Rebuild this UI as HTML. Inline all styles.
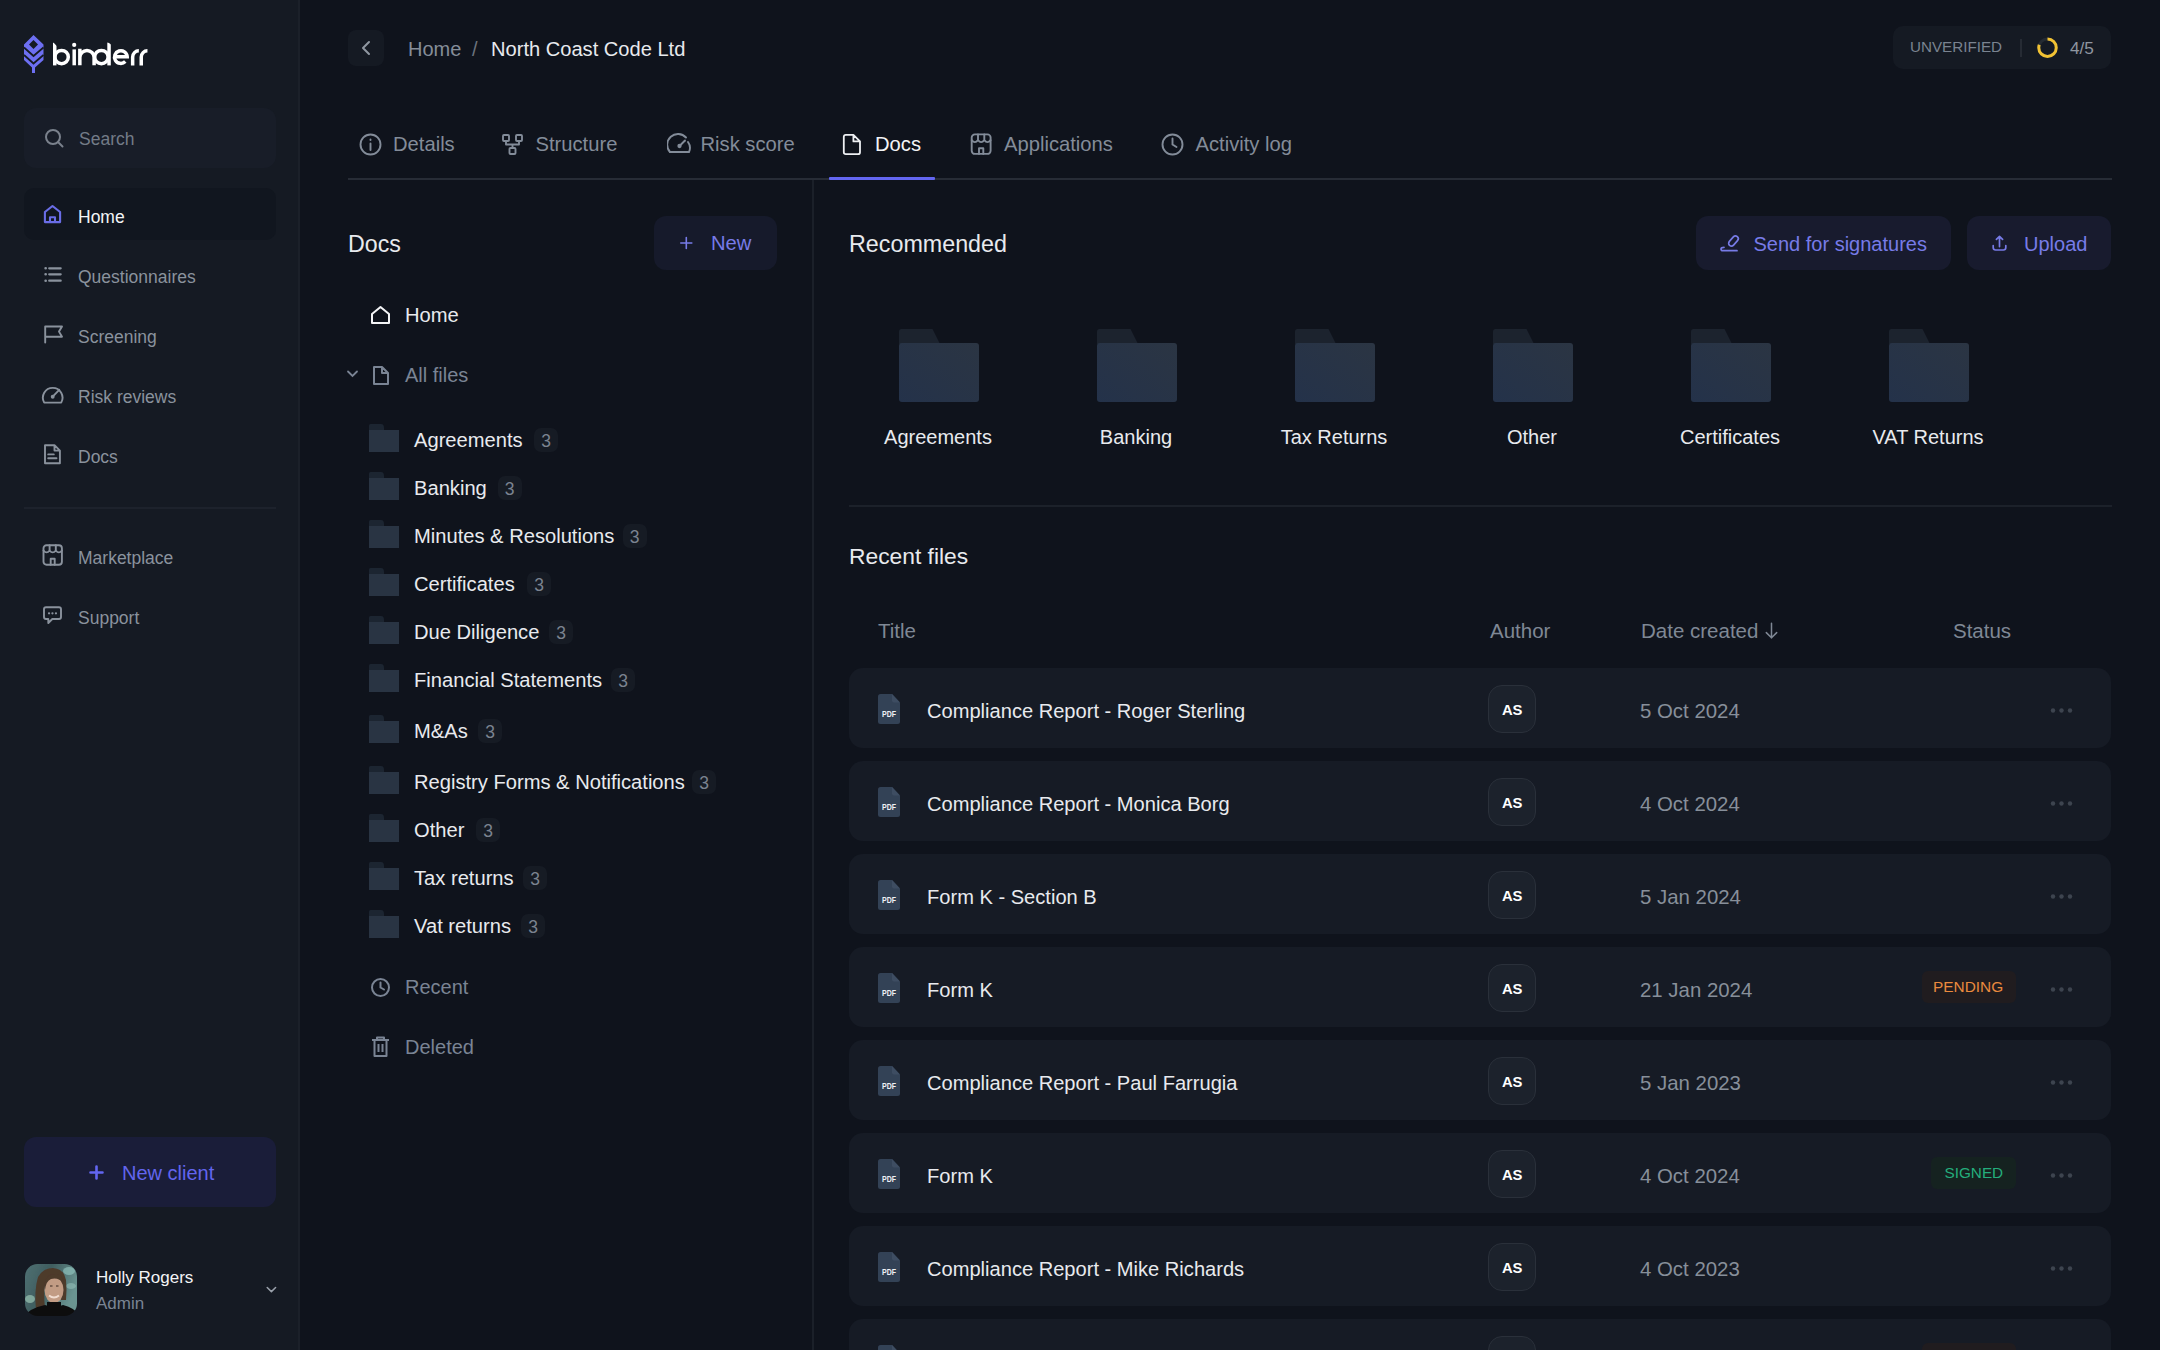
<!DOCTYPE html><html><head><meta charset="utf-8"><style>
html,body{margin:0;padding:0;}
body{width:2160px;height:1350px;overflow:hidden;background:#0f131c;position:relative;font-family:"Liberation Sans",sans-serif;}
.t{position:absolute;height:40px;line-height:40px;white-space:nowrap;}
.b{position:absolute;}
</style></head><body>
<div class="b" style="left:0px;top:0px;width:298px;height:1350px;background:#151a23;border-radius:0px;"></div>
<div class="b" style="left:298px;top:0px;width:2px;height:1350px;background:#1b2029;border-radius:0px;"></div>
<svg class="b" style="left:24px;top:35px;" width="20" height="38" viewBox="0 0 20 38"><path fill="#6d6ff2" d="M9.5 0 L19.5 9.5 L19.5 25 L11 32.5 L11 38 L8 38 L8 32.5 L0 25 L0 9.5 Z"/>
<path fill="#151a23" d="M9.5 5 L14 9.5 L9.5 14 L5 9.5 Z"/>
<path fill="none" stroke="#151a23" stroke-width="1.8" d="M0 12.5 L9.5 21 L19.5 12.5 M0 20 L9.5 28.5 L19.5 20"/></svg>
<svg class="b" style="left:48px;top:38px;" width="104" height="32" viewBox="0 0 104 32"><g transform="translate(-48 -38)" fill="none" stroke="#ffffff" stroke-width="3.5">
<path d="M54.75 42.6 V65.4"/><circle cx="61.6" cy="57.1" r="6.7"/>
<path d="M74.2 49.4 V65.3"/>
<path d="M79.85 48.7 V65.3 M79.85 57.5 A7.12 7.12 0 0 1 94.1 57.5 V65.3"/>
<circle cx="101.4" cy="57.1" r="6.7"/><path d="M109.05 42.6 V65.4"/>
<path d="M114.5 56.7 H127.2 A6.35 6.35 0 1 0 125.3 61.6"/>
<path d="M132.65 65.5 V57 A6.2 6.2 0 0 1 138.85 50.8"/>
<path d="M141.25 65.5 V57 A6.2 6.2 0 0 1 147.45 50.8"/>
</g><g transform="translate(-48 -38)" fill="#151a23"><path d="M52 41 L58 41 L58 47.3 Z"/><path d="M106.5 41 L112.5 41 L112.5 45.8 Z"/></g><circle cx="26.2" cy="6.9" r="2.1" fill="#fff"/></svg>
<div class="b" style="left:24px;top:108px;width:252px;height:60px;background:#181d28;border-radius:12px;"></div>
<svg class="b" style="left:44px;top:128px;" width="20" height="20" viewBox="0 0 20 20"><circle cx="9" cy="9" r="7" fill="none" stroke="#7a818c" stroke-width="2"/><path d="M14 14 L18.5 18.5" stroke="#7a818c" stroke-width="2" stroke-linecap="round"/></svg>
<div class="t" style="left:79px;top:118.62px;font-size:17.5px;color:#737b87;font-weight:400;">Search</div>
<div class="b" style="left:24px;top:188px;width:252px;height:52px;background:#11161f;border-radius:10px;"></div>
<svg class="b" style="left:43px;top:204px;" width="19" height="21" viewBox="0 0 19 21"><g stroke="#6a6de6" stroke-width="2.1" fill="none" stroke-linejoin="round" stroke-linecap="round"><path d="M1.9 8 L9.5 2 L17.1 8 V18.1 H1.9 Z"/><path d="M7 18 V13.2 H12 V18"/></g></svg>
<div class="t" style="left:78px;top:196.81px;font-size:17.5px;color:#f3f4f6;font-weight:400;">Home</div>
<div class="t" style="left:78px;top:257.12px;font-size:17.5px;color:#8a929d;font-weight:400;">Questionnaires</div>
<div class="t" style="left:78px;top:317.12px;font-size:17.5px;color:#8a929d;font-weight:400;">Screening</div>
<div class="t" style="left:78px;top:377.12px;font-size:17.5px;color:#8a929d;font-weight:400;">Risk reviews</div>
<div class="t" style="left:78px;top:437.12px;font-size:17.5px;color:#8a929d;font-weight:400;">Docs</div>
<div class="t" style="left:78px;top:538.12px;font-size:17.5px;color:#8a929d;font-weight:400;">Marketplace</div>
<div class="t" style="left:78px;top:598.12px;font-size:17.5px;color:#8a929d;font-weight:400;">Support</div>
<svg class="b" style="left:43px;top:266px;" width="20" height="20" viewBox="0 0 20 20"><g stroke="#8a929d" stroke-width="1.9" stroke-linecap="round" stroke-linejoin="round" fill="none"><path d="M6.2 2.3 H17.7 M6.2 8.3 H17.7 M6.2 14.7 H17.7" stroke-width="2.2"/><path d="M2.6 2.3 H2.7 M2.6 8.3 H2.7 M2.6 14.7 H2.7" stroke-width="2.6"/></g></svg>
<svg class="b" style="left:43px;top:324px;" width="22" height="22" viewBox="0 0 22 22"><g stroke="#8a929d" stroke-width="1.9" stroke-linecap="round" stroke-linejoin="round" fill="none"><path d="M2.2 18.6 V2.5 H19 L16 7.6 L19 12.8 H2.2"/></g></svg>
<svg class="b" style="left:41px;top:384px;" width="24" height="22" viewBox="0 0 24 22"><g stroke="#8a929d" stroke-width="1.9" stroke-linecap="round" stroke-linejoin="round" fill="none"><path d="M3.2 18.6 A9.8 9.8 0 1 1 20.2 18.6 Z"/><path d="M11.7 12.7 L18.2 5.8"/><circle cx="11.7" cy="12.7" r="1" fill="#8a929d"/></g></svg>
<svg class="b" style="left:43px;top:443px;" width="20" height="23" viewBox="0 0 20 23"><g stroke="#8a929d" stroke-width="1.9" stroke-linecap="round" stroke-linejoin="round" fill="none"><path d="M2 2.2 H11.5 L16.9 7.6 V20.3 H2 Z M11.5 2.2 V7.6 H16.9"/><path d="M5.2 11.4 H10.8 M5.2 15.3 H13.5"/></g></svg>
<div class="b" style="left:24px;top:507px;width:252px;height:2px;background:#1d222c;border-radius:0px;"></div>
<svg class="b" style="left:42px;top:543px;" width="22" height="24" viewBox="0 0 22 24"><g stroke="#8a929d" stroke-width="1.9" stroke-linecap="round" stroke-linejoin="round" fill="none"><rect x="1.5" y="2.2" width="18.4" height="19.5" rx="3"/><path d="M1.5 7.5 Q4.6 11.2 7.6 7.5 Q10.7 11.2 13.8 7.5 Q16.9 11.2 19.9 7.5 M7.6 2.2 V7.5 M13.8 2.2 V7.5 M8.7 21.7 V15.8 H12.7 V21.7"/></g></svg>
<svg class="b" style="left:43px;top:605px;" width="20" height="20" viewBox="0 0 20 20"><g stroke="#8a929d" stroke-width="1.9" stroke-linecap="round" stroke-linejoin="round" fill="none"><path d="M3 2.2 H16 Q18 2.2 18 4.2 V12 Q18 14 16 14 H9.3 L5.3 18 V14 H3 Q1 14 1 12 V4.2 Q1 2.2 3 2.2 Z"/><path d="M6 8.3 H6.1 M9.4 8.3 H9.5 M12.9 8.3 H13" stroke-width="2.2"/></g></svg>
<div class="b" style="left:24px;top:1137px;width:252px;height:70px;background:#1a1d39;border-radius:12px;"></div>
<svg class="b" style="left:89px;top:1165px;" width="15" height="15" viewBox="0 0 15 15"><path d="M7.5 1.5 V13.5 M1.5 7.5 H13.5" stroke="#6366f1" stroke-width="2.6" stroke-linecap="round"/></svg>
<div class="t" style="left:122px;top:1153.36px;font-size:20px;color:#6265ee;font-weight:400;">New client</div>
<svg class="b" style="left:25px;top:1264px;" width="52" height="52" viewBox="0 0 52 52"><defs><clipPath id="av"><rect width="52" height="52" rx="12.5"/></clipPath><linearGradient id="bgv" x1="0" y1="0" x2="1" y2="0.4"><stop offset="0" stop-color="#4f7173"/><stop offset="0.45" stop-color="#3f5d5f"/><stop offset="1" stop-color="#6a9491"/></linearGradient><filter id="avb"><feGaussianBlur stdDeviation="0.7"/></filter></defs><g clip-path="url(#av)"><g filter="url(#avb)"><rect width="52" height="52" fill="url(#bgv)"/><ellipse cx="44" cy="7" rx="6" ry="4" fill="#8fc0bb" opacity="0.7"/><ellipse cx="46" cy="22" rx="5" ry="3" fill="#9cc7c0" opacity="0.5"/><ellipse cx="5" cy="35" rx="5" ry="4" fill="#a9d4c0" opacity="0.6"/><path d="M11 46 Q9 26 13 13 Q18 4 28 4 Q39 5 41 16 Q42 26 41 36 L36 36 Q38 24 35 16 Q28 12 21 16 Q18 26 20 44 Z" fill="#4e3a2c"/><ellipse cx="29" cy="26" rx="9.5" ry="13" fill="#c29c84"/><path d="M19 20 Q22 9 31 10 Q38 11 39 19 Q33 13 26 15 Q21 17 20 26 Z" fill="#4e3a2c"/><path d="M24 31.5 Q29 35.5 34 31.5" stroke="#f1dccf" stroke-width="1.8" fill="none"/><path d="M25 22 H27.5 M31 22 H33.5" stroke="#3a2a22" stroke-width="1.2"/><path d="M-2 54 Q4 44 20 41 Q29 45 38 41 Q51 44 56 54 Z" fill="#0a0b0e"/><path d="M22 38 H36 V45 H22 Z" fill="#0a0b0e"/></g></g></svg>
<div class="t" style="left:96px;top:1258.31px;font-size:17px;color:#f3f4f6;font-weight:400;">Holly Rogers</div>
<div class="t" style="left:96px;top:1284.31px;font-size:17px;color:#7a8494;font-weight:400;">Admin</div>
<svg class="b" style="left:266px;top:1285px;" width="11" height="9" viewBox="0 0 11 9"><path d="M1.2 2.5 L5.4 6.6 L9.6 2.5" stroke="#9aa1ab" stroke-width="1.5" fill="none" stroke-linecap="round" stroke-linejoin="round"/></svg>
<div class="b" style="left:348px;top:30px;width:36px;height:36px;background:#151a23;border-radius:8px;"></div>
<svg class="b" style="left:359px;top:39px;" width="14" height="18" viewBox="0 0 14 18"><path d="M10 3 L4 9 L10 15" stroke="#8f97a1" stroke-width="2" fill="none" stroke-linecap="round" stroke-linejoin="round"/></svg>
<div class="t" style="left:408px;top:28.86px;font-size:20px;color:#858d98;font-weight:400;">Home</div>
<div class="t" style="left:472px;top:28.86px;font-size:20px;color:#6b727d;font-weight:400;">/</div>
<div class="t" style="left:491px;top:28.86px;font-size:20.1px;color:#e8eaee;font-weight:400;">North Coast Code Ltd</div>
<div class="b" style="left:1893px;top:26px;width:218px;height:43px;background:#151a23;border-radius:10px;"></div>
<div class="t" style="left:1910px;top:27.47px;font-size:15.2px;color:#7a8390;font-weight:400;">UNVERIFIED</div>
<div class="b" style="left:2020px;top:39px;width:2px;height:18px;background:#262b34;border-radius:0px;"></div>
<svg class="b" style="left:2036px;top:36px;" width="23" height="23" viewBox="0 0 23 23"><circle cx="11.5" cy="11.7" r="8.75" fill="none" stroke="#252b33" stroke-width="3"/><circle cx="11.5" cy="11.7" r="8.75" fill="none" stroke="#f2c233" stroke-width="3" stroke-dasharray="44 55" transform="rotate(-90 11.5 11.7)"/></svg>
<div class="t" style="left:2070px;top:28.31px;font-size:17.2px;color:#8f96a0;font-weight:400;">4/5</div>
<div class="t" style="left:393px;top:124.46px;font-size:20.2px;color:#838c99;font-weight:400;">Details</div>
<div class="t" style="left:535.5px;top:124.46px;font-size:20.2px;color:#838c99;font-weight:400;">Structure</div>
<div class="t" style="left:700.5px;top:124.46px;font-size:20.2px;color:#838c99;font-weight:400;">Risk score</div>
<div class="t" style="left:875px;top:124.46px;font-size:20.2px;color:#f3f4f6;font-weight:400;">Docs</div>
<div class="t" style="left:1004px;top:124.46px;font-size:20.2px;color:#838c99;font-weight:400;">Applications</div>
<div class="t" style="left:1195.5px;top:124.46px;font-size:20.2px;color:#838c99;font-weight:400;">Activity log</div>
<div class="b" style="left:348px;top:178px;width:1764px;height:2px;background:#272c36;border-radius:0px;"></div>
<div class="b" style="left:829px;top:177px;width:106px;height:3px;background:#6366f1;border-radius:1px;"></div>
<svg class="b" style="left:359px;top:133px;" width="23" height="23" viewBox="0 0 23 23"><g stroke="#838c99" stroke-width="1.9" fill="none" stroke-linecap="round"><circle cx="11.5" cy="11.5" r="10"/><path d="M11.5 10.5 V17 M11.5 6.5 V7"/></g></svg>
<svg class="b" style="left:501px;top:133px;" width="23" height="23" viewBox="0 0 23 23"><g stroke="#838c99" stroke-width="1.9" fill="none" stroke-linejoin="round"><rect x="2" y="2" width="6" height="6" rx="1"/><rect x="15" y="2" width="6" height="6" rx="1"/><rect x="8.5" y="15" width="6" height="6" rx="1"/><path d="M5 8 V11.5 H18 V8 M11.5 11.5 V15"/></g></svg>
<svg class="b" style="left:667px;top:133px;" width="25" height="23" viewBox="0 0 25 23"><g stroke="#838c99" stroke-width="1.9" fill="none" stroke-linecap="round" stroke-linejoin="round"><path d="M3 19 A10 10 0 1 1 19 4.5"/><path d="M3 19 H22 A10 10 0 0 0 21 9"/><path d="M12.5 13 L18 7.5"/><circle cx="12.5" cy="13" r="1.2" fill="#838c99"/></g></svg>
<svg class="b" style="left:842px;top:133px;" width="20" height="23" viewBox="0 0 20 23"><g stroke="#eef0f3" stroke-width="1.8" fill="none" stroke-linejoin="round"><path d="M3.8 1.8 H11.4 L18 8.4 V19.2 Q18 21.2 16 21.2 H3.8 Q1.8 21.2 1.8 19.2 V3.8 Q1.8 1.8 3.8 1.8 Z M11.4 1.8 V8.4 H18"/></g></svg>
<svg class="b" style="left:970px;top:132px;" width="23" height="24" viewBox="0 0 23 24"><g stroke="#838c99" stroke-width="1.9" fill="none" stroke-linejoin="round" stroke-linecap="round"><rect x="1.7" y="2.4" width="18.9" height="19.5" rx="3.2"/><path d="M1.7 8.2 Q4.85 12 8 8.2 Q11.15 12 14.3 8.2 Q17.45 12 20.6 8.2 M8 2.4 V8.2 M14.3 2.4 V8.2 M9 21.9 V16.2 H13.3 V21.9"/></g></svg>
<svg class="b" style="left:1161px;top:133px;" width="23" height="23" viewBox="0 0 23 23"><g stroke="#838c99" stroke-width="1.9" fill="none" stroke-linecap="round"><circle cx="11.5" cy="11.5" r="10"/><path d="M11.5 5.5 V11.5 L15.5 14"/></g></svg>
<div class="b" style="left:812px;top:180px;width:2px;height:1170px;background:#1b2029;border-radius:0px;"></div>
<div class="t" style="left:348px;top:223.92px;font-size:23.2px;color:#e8eaee;font-weight:400;">Docs</div>
<div class="b" style="left:654px;top:216px;width:123px;height:54px;background:#161a2b;border-radius:12px;"></div>
<svg class="b" style="left:680px;top:236px;" width="13" height="14" viewBox="0 0 13 14"><path d="M6.3 1.5 V12.5 M0.8 7 H11.8" stroke="#777be8" stroke-width="1.6" stroke-linecap="round"/></svg>
<div class="t" style="left:711px;top:223.16px;font-size:20.2px;color:#777be8;font-weight:400;">New</div>
<svg class="b" style="left:370px;top:305px;" width="21" height="20" viewBox="0 0 21 20"><path d="M2 9 L10.5 2 L19 9 V18 H2 Z" fill="none" stroke="#f3f4f6" stroke-width="2" stroke-linejoin="round"/></svg>
<div class="t" style="left:405px;top:295.36px;font-size:20.2px;color:#e8eaee;font-weight:400;">Home</div>
<svg class="b" style="left:346px;top:369px;" width="13" height="10" viewBox="0 0 13 10"><path d="M2 2.5 L6.5 7 L11 2.5" stroke="#7a8494" stroke-width="1.8" fill="none" stroke-linecap="round"/></svg>
<svg class="b" style="left:372px;top:365px;" width="18" height="21" viewBox="0 0 18 21"><g stroke="#7a8494" stroke-width="2" fill="none" stroke-linejoin="round"><path d="M2 2 H10 L16 8 V19 H2 Z M10 2 V8 H16"/></g></svg>
<div class="t" style="left:405px;top:355.36px;font-size:20px;color:#7a8494;font-weight:400;">All files</div>
<svg class="b" style="left:369px;top:424px;" width="30" height="28" viewBox="0 0 30 28"><path d="M0 6 V1.5 Q0 0 1.5 0 H12 Q15 0 15 4 V6 Z" fill="#1c2531"/><rect x="0" y="6" width="30" height="22" fill="#293443"/></svg>
<div class="t" style="left:414px;top:420.36px;font-size:20.15px;color:#e8eaee;font-weight:400;">Agreements</div>
<div class="b" style="left:534px;top:428px;width:24px;height:24px;background:#161b24;border-radius:7px;"></div>
<div class="t" style="left:246px;width:600px;text-align:center;top:420.81px;font-size:17.5px;color:#7b8390;font-weight:400;">3</div>
<svg class="b" style="left:369px;top:472px;" width="30" height="28" viewBox="0 0 30 28"><path d="M0 6 V1.5 Q0 0 1.5 0 H12 Q15 0 15 4 V6 Z" fill="#1c2531"/><rect x="0" y="6" width="30" height="22" fill="#293443"/></svg>
<div class="t" style="left:414px;top:468.36px;font-size:20.15px;color:#e8eaee;font-weight:400;">Banking</div>
<div class="b" style="left:497.5px;top:476px;width:24.0px;height:24px;background:#161b24;border-radius:7px;"></div>
<div class="t" style="left:209.5px;width:600px;text-align:center;top:468.81px;font-size:17.5px;color:#7b8390;font-weight:400;">3</div>
<svg class="b" style="left:369px;top:520px;" width="30" height="28" viewBox="0 0 30 28"><path d="M0 6 V1.5 Q0 0 1.5 0 H12 Q15 0 15 4 V6 Z" fill="#1c2531"/><rect x="0" y="6" width="30" height="22" fill="#293443"/></svg>
<div class="t" style="left:414px;top:516.36px;font-size:20.15px;color:#e8eaee;font-weight:400;">Minutes &amp; Resolutions</div>
<div class="b" style="left:622.6px;top:524px;width:24.0px;height:24px;background:#161b24;border-radius:7px;"></div>
<div class="t" style="left:334.6px;width:600px;text-align:center;top:516.82px;font-size:17.5px;color:#7b8390;font-weight:400;">3</div>
<svg class="b" style="left:369px;top:568px;" width="30" height="28" viewBox="0 0 30 28"><path d="M0 6 V1.5 Q0 0 1.5 0 H12 Q15 0 15 4 V6 Z" fill="#1c2531"/><rect x="0" y="6" width="30" height="22" fill="#293443"/></svg>
<div class="t" style="left:414px;top:564.36px;font-size:20.15px;color:#e8eaee;font-weight:400;">Certificates</div>
<div class="b" style="left:527px;top:572px;width:24px;height:24px;background:#161b24;border-radius:7px;"></div>
<div class="t" style="left:239px;width:600px;text-align:center;top:564.82px;font-size:17.5px;color:#7b8390;font-weight:400;">3</div>
<svg class="b" style="left:369px;top:616px;" width="30" height="28" viewBox="0 0 30 28"><path d="M0 6 V1.5 Q0 0 1.5 0 H12 Q15 0 15 4 V6 Z" fill="#1c2531"/><rect x="0" y="6" width="30" height="22" fill="#293443"/></svg>
<div class="t" style="left:414px;top:612.36px;font-size:20.15px;color:#e8eaee;font-weight:400;">Due Diligence</div>
<div class="b" style="left:549px;top:620px;width:24px;height:24px;background:#161b24;border-radius:7px;"></div>
<div class="t" style="left:261px;width:600px;text-align:center;top:612.82px;font-size:17.5px;color:#7b8390;font-weight:400;">3</div>
<svg class="b" style="left:369px;top:664px;" width="30" height="28" viewBox="0 0 30 28"><path d="M0 6 V1.5 Q0 0 1.5 0 H12 Q15 0 15 4 V6 Z" fill="#1c2531"/><rect x="0" y="6" width="30" height="22" fill="#293443"/></svg>
<div class="t" style="left:414px;top:660.36px;font-size:20.15px;color:#e8eaee;font-weight:400;">Financial Statements</div>
<div class="b" style="left:611px;top:668px;width:24px;height:24px;background:#161b24;border-radius:7px;"></div>
<div class="t" style="left:323px;width:600px;text-align:center;top:660.82px;font-size:17.5px;color:#7b8390;font-weight:400;">3</div>
<svg class="b" style="left:369px;top:715px;" width="30" height="28" viewBox="0 0 30 28"><path d="M0 6 V1.5 Q0 0 1.5 0 H12 Q15 0 15 4 V6 Z" fill="#1c2531"/><rect x="0" y="6" width="30" height="22" fill="#293443"/></svg>
<div class="t" style="left:414px;top:711.36px;font-size:20.15px;color:#e8eaee;font-weight:400;">M&amp;As</div>
<div class="b" style="left:478px;top:719px;width:24px;height:24px;background:#161b24;border-radius:7px;"></div>
<div class="t" style="left:190px;width:600px;text-align:center;top:711.82px;font-size:17.5px;color:#7b8390;font-weight:400;">3</div>
<svg class="b" style="left:369px;top:766px;" width="30" height="28" viewBox="0 0 30 28"><path d="M0 6 V1.5 Q0 0 1.5 0 H12 Q15 0 15 4 V6 Z" fill="#1c2531"/><rect x="0" y="6" width="30" height="22" fill="#293443"/></svg>
<div class="t" style="left:414px;top:762.36px;font-size:20.15px;color:#e8eaee;font-weight:400;">Registry Forms &amp; Notifications</div>
<div class="b" style="left:692px;top:770px;width:24px;height:24px;background:#161b24;border-radius:7px;"></div>
<div class="t" style="left:404px;width:600px;text-align:center;top:762.82px;font-size:17.5px;color:#7b8390;font-weight:400;">3</div>
<svg class="b" style="left:369px;top:814px;" width="30" height="28" viewBox="0 0 30 28"><path d="M0 6 V1.5 Q0 0 1.5 0 H12 Q15 0 15 4 V6 Z" fill="#1c2531"/><rect x="0" y="6" width="30" height="22" fill="#293443"/></svg>
<div class="t" style="left:414px;top:810.36px;font-size:20.15px;color:#e8eaee;font-weight:400;">Other</div>
<div class="b" style="left:476px;top:818px;width:24px;height:24px;background:#161b24;border-radius:7px;"></div>
<div class="t" style="left:188px;width:600px;text-align:center;top:810.82px;font-size:17.5px;color:#7b8390;font-weight:400;">3</div>
<svg class="b" style="left:369px;top:862px;" width="30" height="28" viewBox="0 0 30 28"><path d="M0 6 V1.5 Q0 0 1.5 0 H12 Q15 0 15 4 V6 Z" fill="#1c2531"/><rect x="0" y="6" width="30" height="22" fill="#293443"/></svg>
<div class="t" style="left:414px;top:858.36px;font-size:20.15px;color:#e8eaee;font-weight:400;">Tax returns</div>
<div class="b" style="left:523px;top:866px;width:24px;height:24px;background:#161b24;border-radius:7px;"></div>
<div class="t" style="left:235px;width:600px;text-align:center;top:858.82px;font-size:17.5px;color:#7b8390;font-weight:400;">3</div>
<svg class="b" style="left:369px;top:910px;" width="30" height="28" viewBox="0 0 30 28"><path d="M0 6 V1.5 Q0 0 1.5 0 H12 Q15 0 15 4 V6 Z" fill="#1c2531"/><rect x="0" y="6" width="30" height="22" fill="#293443"/></svg>
<div class="t" style="left:414px;top:906.36px;font-size:20.15px;color:#e8eaee;font-weight:400;">Vat returns</div>
<div class="b" style="left:521px;top:914px;width:24px;height:24px;background:#161b24;border-radius:7px;"></div>
<div class="t" style="left:233px;width:600px;text-align:center;top:906.82px;font-size:17.5px;color:#7b8390;font-weight:400;">3</div>
<svg class="b" style="left:370px;top:977px;" width="21" height="21" viewBox="0 0 21 21"><g stroke="#7a8494" stroke-width="2" fill="none" stroke-linecap="round"><circle cx="10.5" cy="10.5" r="8.5"/><path d="M10.5 5.5 V10.5 L14 12.5"/></g></svg>
<div class="t" style="left:405px;top:967.36px;font-size:20px;color:#7a8494;font-weight:400;">Recent</div>
<svg class="b" style="left:371px;top:1036px;" width="19" height="22" viewBox="0 0 19 22"><g stroke="#7a8494" stroke-width="2" fill="none" stroke-linejoin="round"><path d="M1 4 H18 M6 4 V1.5 H13 V4 M3.5 4 V20 H15.5 V4 M7.5 8 V16 M11.5 8 V16"/></g></svg>
<div class="t" style="left:405px;top:1027.36px;font-size:20px;color:#7a8494;font-weight:400;">Deleted</div>
<div class="t" style="left:849px;top:223.92px;font-size:23.3px;color:#e8eaee;font-weight:400;">Recommended</div>
<div class="b" style="left:1696px;top:216px;width:255px;height:54px;background:#181b2e;border-radius:12px;"></div>
<svg class="b" style="left:1718px;top:231px;" width="24" height="24" viewBox="0 0 24 24"><g stroke="#777be6" stroke-width="1.7" fill="none" stroke-linecap="round"><path d="M6 16.3 Q3 16.3 3 18 Q3 19.7 5 19.7 H19"/><rect x="9.7" y="7.2" width="11.5" height="5.6" rx="2.8" transform="rotate(-48 15.45 10)"/></g></svg>
<div class="t" style="left:1753.5px;top:223.86px;font-size:20px;color:#777be8;font-weight:400;">Send for signatures</div>
<div class="b" style="left:1967px;top:216px;width:144px;height:54px;background:#181b2e;border-radius:12px;"></div>
<svg class="b" style="left:1990px;top:234px;" width="19" height="18" viewBox="0 0 19 18"><g stroke="#777be6" stroke-width="1.7" fill="none" stroke-linecap="round" stroke-linejoin="round"><path d="M9.5 2.4 V12.6 M6.4 5.4 L9.5 2.3 L12.6 5.4 M3.2 11.6 V13.6 Q3.2 16 5.6 16 H13.4 Q15.8 16 15.8 13.6 V11.6"/></g></svg>
<div class="t" style="left:2024px;top:223.86px;font-size:20px;color:#777be8;font-weight:400;">Upload</div>
<svg class="b" style="left:899px;top:329px;" width="80" height="73" viewBox="0 0 80 73"><defs><linearGradient id="fg938" x1="0" y1="1" x2="1" y2="0"><stop offset="0" stop-color="#24324a"/><stop offset="1" stop-color="#2b3543"/></linearGradient></defs><path d="M0 15 V2.5 Q0 0 2.5 0 H33.5 L41 15 Z" fill="#1c232e"/><rect x="0" y="14" width="80" height="59" rx="3" fill="url(#fg938)"/></svg>
<div class="t" style="left:638px;width:600px;text-align:center;top:416.86px;font-size:20px;color:#e8eaee;font-weight:400;">Agreements</div>
<svg class="b" style="left:1097px;top:329px;" width="80" height="73" viewBox="0 0 80 73"><defs><linearGradient id="fg1136" x1="0" y1="1" x2="1" y2="0"><stop offset="0" stop-color="#24324a"/><stop offset="1" stop-color="#2b3543"/></linearGradient></defs><path d="M0 15 V2.5 Q0 0 2.5 0 H33.5 L41 15 Z" fill="#1c232e"/><rect x="0" y="14" width="80" height="59" rx="3" fill="url(#fg1136)"/></svg>
<div class="t" style="left:836px;width:600px;text-align:center;top:416.86px;font-size:20px;color:#e8eaee;font-weight:400;">Banking</div>
<svg class="b" style="left:1295px;top:329px;" width="80" height="73" viewBox="0 0 80 73"><defs><linearGradient id="fg1334" x1="0" y1="1" x2="1" y2="0"><stop offset="0" stop-color="#24324a"/><stop offset="1" stop-color="#2b3543"/></linearGradient></defs><path d="M0 15 V2.5 Q0 0 2.5 0 H33.5 L41 15 Z" fill="#1c232e"/><rect x="0" y="14" width="80" height="59" rx="3" fill="url(#fg1334)"/></svg>
<div class="t" style="left:1034px;width:600px;text-align:center;top:416.86px;font-size:20px;color:#e8eaee;font-weight:400;">Tax Returns</div>
<svg class="b" style="left:1493px;top:329px;" width="80" height="73" viewBox="0 0 80 73"><defs><linearGradient id="fg1532" x1="0" y1="1" x2="1" y2="0"><stop offset="0" stop-color="#24324a"/><stop offset="1" stop-color="#2b3543"/></linearGradient></defs><path d="M0 15 V2.5 Q0 0 2.5 0 H33.5 L41 15 Z" fill="#1c232e"/><rect x="0" y="14" width="80" height="59" rx="3" fill="url(#fg1532)"/></svg>
<div class="t" style="left:1232px;width:600px;text-align:center;top:416.86px;font-size:20px;color:#e8eaee;font-weight:400;">Other</div>
<svg class="b" style="left:1691px;top:329px;" width="80" height="73" viewBox="0 0 80 73"><defs><linearGradient id="fg1730" x1="0" y1="1" x2="1" y2="0"><stop offset="0" stop-color="#24324a"/><stop offset="1" stop-color="#2b3543"/></linearGradient></defs><path d="M0 15 V2.5 Q0 0 2.5 0 H33.5 L41 15 Z" fill="#1c232e"/><rect x="0" y="14" width="80" height="59" rx="3" fill="url(#fg1730)"/></svg>
<div class="t" style="left:1430px;width:600px;text-align:center;top:416.86px;font-size:20px;color:#e8eaee;font-weight:400;">Certificates</div>
<svg class="b" style="left:1889px;top:329px;" width="80" height="73" viewBox="0 0 80 73"><defs><linearGradient id="fg1928" x1="0" y1="1" x2="1" y2="0"><stop offset="0" stop-color="#24324a"/><stop offset="1" stop-color="#2b3543"/></linearGradient></defs><path d="M0 15 V2.5 Q0 0 2.5 0 H33.5 L41 15 Z" fill="#1c232e"/><rect x="0" y="14" width="80" height="59" rx="3" fill="url(#fg1928)"/></svg>
<div class="t" style="left:1628px;width:600px;text-align:center;top:416.86px;font-size:20px;color:#e8eaee;font-weight:400;">VAT Returns</div>
<div class="b" style="left:849px;top:505px;width:1263px;height:2px;background:#1c212a;border-radius:0px;"></div>
<div class="t" style="left:849px;top:536.41px;font-size:22.8px;color:#e8eaee;font-weight:400;">Recent files</div>
<div class="t" style="left:878px;top:611.37px;font-size:20.5px;color:#7f8895;font-weight:400;">Title</div>
<div class="t" style="left:1490px;top:611.37px;font-size:20.5px;color:#7f8895;font-weight:400;">Author</div>
<div class="t" style="left:1641px;top:611.37px;font-size:20.5px;color:#7f8895;font-weight:400;">Date created</div>
<svg class="b" style="left:1764px;top:620px;" width="14" height="22" viewBox="0 0 14 22"><path d="M7.5 3.2 V18 M2.3 12.6 L7.5 17.8 L12.7 12.6" stroke="#7f8895" stroke-width="1.5" fill="none" stroke-linecap="round" stroke-linejoin="round"/></svg>
<div class="t" style="left:1953px;top:611.37px;font-size:20.5px;color:#7f8895;font-weight:400;">Status</div>
<div class="b" style="left:849px;top:668px;width:1262px;height:80px;background:#161b25;border-radius:14px;"></div>
<svg class="b" style="left:878px;top:694px;" width="22" height="30" viewBox="0 0 22 30"><path d="M2.5 0 H14 L22 8.5 V27.5 Q22 30 19.5 30 H2.5 Q0 30 0 27.5 V2.5 Q0 0 2.5 0 Z" fill="#334256"/><path d="M14 0 V6.5 Q14 8.5 16 8.5 H22 Z" fill="#3e4d62"/><text x="4" y="23" textLength="14" lengthAdjust="spacingAndGlyphs" font-family="Liberation Sans" font-weight="700" font-size="9.6" fill="#eef1f5">PDF</text></svg>
<div class="t" style="left:927px;top:690.86px;font-size:20.1px;color:#e8eaee;font-weight:400;">Compliance Report - Roger Sterling</div>
<div class="b" style="left:1488px;top:685px;width:48px;height:48px;background:#1c222c;border-radius:14px;box-sizing:border-box;border:1.5px solid #2a303a;"></div>
<div class="t" style="left:1212px;width:600px;text-align:center;top:689.87px;font-size:14.8px;color:#ffffff;font-weight:700;letter-spacing:-0.2px;">AS</div>
<div class="t" style="left:1640px;top:690.87px;font-size:20.4px;color:#878f9a;font-weight:400;">5 Oct 2024</div>
<svg class="b" style="left:2050px;top:707px;" width="24" height="7" viewBox="0 0 24 7"><circle cx="3" cy="3.5" r="2.2" fill="#3d444f"/><circle cx="11.5" cy="3.5" r="2.2" fill="#3d444f"/><circle cx="20" cy="3.5" r="2.2" fill="#3d444f"/></svg>
<div class="b" style="left:849px;top:761px;width:1262px;height:80px;background:#161b25;border-radius:14px;"></div>
<svg class="b" style="left:878px;top:787px;" width="22" height="30" viewBox="0 0 22 30"><path d="M2.5 0 H14 L22 8.5 V27.5 Q22 30 19.5 30 H2.5 Q0 30 0 27.5 V2.5 Q0 0 2.5 0 Z" fill="#334256"/><path d="M14 0 V6.5 Q14 8.5 16 8.5 H22 Z" fill="#3e4d62"/><text x="4" y="23" textLength="14" lengthAdjust="spacingAndGlyphs" font-family="Liberation Sans" font-weight="700" font-size="9.6" fill="#eef1f5">PDF</text></svg>
<div class="t" style="left:927px;top:783.86px;font-size:20.1px;color:#e8eaee;font-weight:400;">Compliance Report - Monica Borg</div>
<div class="b" style="left:1488px;top:778px;width:48px;height:48px;background:#1c222c;border-radius:14px;box-sizing:border-box;border:1.5px solid #2a303a;"></div>
<div class="t" style="left:1212px;width:600px;text-align:center;top:782.87px;font-size:14.8px;color:#ffffff;font-weight:700;letter-spacing:-0.2px;">AS</div>
<div class="t" style="left:1640px;top:783.87px;font-size:20.4px;color:#878f9a;font-weight:400;">4 Oct 2024</div>
<svg class="b" style="left:2050px;top:800px;" width="24" height="7" viewBox="0 0 24 7"><circle cx="3" cy="3.5" r="2.2" fill="#3d444f"/><circle cx="11.5" cy="3.5" r="2.2" fill="#3d444f"/><circle cx="20" cy="3.5" r="2.2" fill="#3d444f"/></svg>
<div class="b" style="left:849px;top:854px;width:1262px;height:80px;background:#161b25;border-radius:14px;"></div>
<svg class="b" style="left:878px;top:880px;" width="22" height="30" viewBox="0 0 22 30"><path d="M2.5 0 H14 L22 8.5 V27.5 Q22 30 19.5 30 H2.5 Q0 30 0 27.5 V2.5 Q0 0 2.5 0 Z" fill="#334256"/><path d="M14 0 V6.5 Q14 8.5 16 8.5 H22 Z" fill="#3e4d62"/><text x="4" y="23" textLength="14" lengthAdjust="spacingAndGlyphs" font-family="Liberation Sans" font-weight="700" font-size="9.6" fill="#eef1f5">PDF</text></svg>
<div class="t" style="left:927px;top:876.86px;font-size:20.1px;color:#e8eaee;font-weight:400;">Form K - Section B</div>
<div class="b" style="left:1488px;top:871px;width:48px;height:48px;background:#1c222c;border-radius:14px;box-sizing:border-box;border:1.5px solid #2a303a;"></div>
<div class="t" style="left:1212px;width:600px;text-align:center;top:875.87px;font-size:14.8px;color:#ffffff;font-weight:700;letter-spacing:-0.2px;">AS</div>
<div class="t" style="left:1640px;top:876.87px;font-size:20.4px;color:#878f9a;font-weight:400;">5 Jan 2024</div>
<svg class="b" style="left:2050px;top:893px;" width="24" height="7" viewBox="0 0 24 7"><circle cx="3" cy="3.5" r="2.2" fill="#3d444f"/><circle cx="11.5" cy="3.5" r="2.2" fill="#3d444f"/><circle cx="20" cy="3.5" r="2.2" fill="#3d444f"/></svg>
<div class="b" style="left:849px;top:947px;width:1262px;height:80px;background:#161b25;border-radius:14px;"></div>
<svg class="b" style="left:878px;top:973px;" width="22" height="30" viewBox="0 0 22 30"><path d="M2.5 0 H14 L22 8.5 V27.5 Q22 30 19.5 30 H2.5 Q0 30 0 27.5 V2.5 Q0 0 2.5 0 Z" fill="#334256"/><path d="M14 0 V6.5 Q14 8.5 16 8.5 H22 Z" fill="#3e4d62"/><text x="4" y="23" textLength="14" lengthAdjust="spacingAndGlyphs" font-family="Liberation Sans" font-weight="700" font-size="9.6" fill="#eef1f5">PDF</text></svg>
<div class="t" style="left:927px;top:969.86px;font-size:20.1px;color:#e8eaee;font-weight:400;">Form K</div>
<div class="b" style="left:1488px;top:964px;width:48px;height:48px;background:#1c222c;border-radius:14px;box-sizing:border-box;border:1.5px solid #2a303a;"></div>
<div class="t" style="left:1212px;width:600px;text-align:center;top:968.87px;font-size:14.8px;color:#ffffff;font-weight:700;letter-spacing:-0.2px;">AS</div>
<div class="t" style="left:1640px;top:969.87px;font-size:20.4px;color:#878f9a;font-weight:400;">21 Jan 2024</div>
<svg class="b" style="left:2050px;top:986px;" width="24" height="7" viewBox="0 0 24 7"><circle cx="3" cy="3.5" r="2.2" fill="#3d444f"/><circle cx="11.5" cy="3.5" r="2.2" fill="#3d444f"/><circle cx="20" cy="3.5" r="2.2" fill="#3d444f"/></svg>
<div class="b" style="left:1922px;top:971px;width:94px;height:32px;background:#201c1f;border-radius:6px;"></div>
<div class="t" style="left:1933px;top:967.48px;font-size:15.4px;color:#ea8a3e;font-weight:400;">PENDING</div>
<div class="b" style="left:849px;top:1040px;width:1262px;height:80px;background:#161b25;border-radius:14px;"></div>
<svg class="b" style="left:878px;top:1066px;" width="22" height="30" viewBox="0 0 22 30"><path d="M2.5 0 H14 L22 8.5 V27.5 Q22 30 19.5 30 H2.5 Q0 30 0 27.5 V2.5 Q0 0 2.5 0 Z" fill="#334256"/><path d="M14 0 V6.5 Q14 8.5 16 8.5 H22 Z" fill="#3e4d62"/><text x="4" y="23" textLength="14" lengthAdjust="spacingAndGlyphs" font-family="Liberation Sans" font-weight="700" font-size="9.6" fill="#eef1f5">PDF</text></svg>
<div class="t" style="left:927px;top:1062.86px;font-size:20.1px;color:#e8eaee;font-weight:400;">Compliance Report - Paul Farrugia</div>
<div class="b" style="left:1488px;top:1057px;width:48px;height:48px;background:#1c222c;border-radius:14px;box-sizing:border-box;border:1.5px solid #2a303a;"></div>
<div class="t" style="left:1212px;width:600px;text-align:center;top:1061.87px;font-size:14.8px;color:#ffffff;font-weight:700;letter-spacing:-0.2px;">AS</div>
<div class="t" style="left:1640px;top:1062.87px;font-size:20.4px;color:#878f9a;font-weight:400;">5 Jan 2023</div>
<svg class="b" style="left:2050px;top:1079px;" width="24" height="7" viewBox="0 0 24 7"><circle cx="3" cy="3.5" r="2.2" fill="#3d444f"/><circle cx="11.5" cy="3.5" r="2.2" fill="#3d444f"/><circle cx="20" cy="3.5" r="2.2" fill="#3d444f"/></svg>
<div class="b" style="left:849px;top:1133px;width:1262px;height:80px;background:#161b25;border-radius:14px;"></div>
<svg class="b" style="left:878px;top:1159px;" width="22" height="30" viewBox="0 0 22 30"><path d="M2.5 0 H14 L22 8.5 V27.5 Q22 30 19.5 30 H2.5 Q0 30 0 27.5 V2.5 Q0 0 2.5 0 Z" fill="#334256"/><path d="M14 0 V6.5 Q14 8.5 16 8.5 H22 Z" fill="#3e4d62"/><text x="4" y="23" textLength="14" lengthAdjust="spacingAndGlyphs" font-family="Liberation Sans" font-weight="700" font-size="9.6" fill="#eef1f5">PDF</text></svg>
<div class="t" style="left:927px;top:1155.86px;font-size:20.1px;color:#e8eaee;font-weight:400;">Form K</div>
<div class="b" style="left:1488px;top:1150px;width:48px;height:48px;background:#1c222c;border-radius:14px;box-sizing:border-box;border:1.5px solid #2a303a;"></div>
<div class="t" style="left:1212px;width:600px;text-align:center;top:1154.87px;font-size:14.8px;color:#ffffff;font-weight:700;letter-spacing:-0.2px;">AS</div>
<div class="t" style="left:1640px;top:1155.87px;font-size:20.4px;color:#878f9a;font-weight:400;">4 Oct 2024</div>
<svg class="b" style="left:2050px;top:1172px;" width="24" height="7" viewBox="0 0 24 7"><circle cx="3" cy="3.5" r="2.2" fill="#3d444f"/><circle cx="11.5" cy="3.5" r="2.2" fill="#3d444f"/><circle cx="20" cy="3.5" r="2.2" fill="#3d444f"/></svg>
<div class="b" style="left:1931px;top:1157px;width:85px;height:32px;background:#152220;border-radius:6px;"></div>
<div class="t" style="left:1944.5px;top:1153.48px;font-size:15.3px;color:#24ad7c;font-weight:400;">SIGNED</div>
<div class="b" style="left:849px;top:1226px;width:1262px;height:80px;background:#161b25;border-radius:14px;"></div>
<svg class="b" style="left:878px;top:1252px;" width="22" height="30" viewBox="0 0 22 30"><path d="M2.5 0 H14 L22 8.5 V27.5 Q22 30 19.5 30 H2.5 Q0 30 0 27.5 V2.5 Q0 0 2.5 0 Z" fill="#334256"/><path d="M14 0 V6.5 Q14 8.5 16 8.5 H22 Z" fill="#3e4d62"/><text x="4" y="23" textLength="14" lengthAdjust="spacingAndGlyphs" font-family="Liberation Sans" font-weight="700" font-size="9.6" fill="#eef1f5">PDF</text></svg>
<div class="t" style="left:927px;top:1248.86px;font-size:20.1px;color:#e8eaee;font-weight:400;">Compliance Report - Mike Richards</div>
<div class="b" style="left:1488px;top:1243px;width:48px;height:48px;background:#1c222c;border-radius:14px;box-sizing:border-box;border:1.5px solid #2a303a;"></div>
<div class="t" style="left:1212px;width:600px;text-align:center;top:1247.87px;font-size:14.8px;color:#ffffff;font-weight:700;letter-spacing:-0.2px;">AS</div>
<div class="t" style="left:1640px;top:1248.87px;font-size:20.4px;color:#878f9a;font-weight:400;">4 Oct 2023</div>
<svg class="b" style="left:2050px;top:1265px;" width="24" height="7" viewBox="0 0 24 7"><circle cx="3" cy="3.5" r="2.2" fill="#3d444f"/><circle cx="11.5" cy="3.5" r="2.2" fill="#3d444f"/><circle cx="20" cy="3.5" r="2.2" fill="#3d444f"/></svg>
<div class="b" style="left:849px;top:1319px;width:1262px;height:80px;background:#161b25;border-radius:14px;"></div>
<svg class="b" style="left:878px;top:1345px;" width="22" height="30" viewBox="0 0 22 30"><path d="M2.5 0 H14 L22 8.5 V27.5 Q22 30 19.5 30 H2.5 Q0 30 0 27.5 V2.5 Q0 0 2.5 0 Z" fill="#334256"/><path d="M14 0 V6.5 Q14 8.5 16 8.5 H22 Z" fill="#3e4d62"/><text x="4" y="23" textLength="14" lengthAdjust="spacingAndGlyphs" font-family="Liberation Sans" font-weight="700" font-size="9.6" fill="#eef1f5">PDF</text></svg>
<div class="t" style="left:927px;top:1341.86px;font-size:20.1px;color:#e8eaee;font-weight:400;">Form K</div>
<div class="b" style="left:1488px;top:1336px;width:48px;height:48px;background:#1c222c;border-radius:14px;box-sizing:border-box;border:1.5px solid #2a303a;"></div>
<div class="t" style="left:1212px;width:600px;text-align:center;top:1340.87px;font-size:14.8px;color:#ffffff;font-weight:700;letter-spacing:-0.2px;">AS</div>
<div class="t" style="left:1640px;top:1341.87px;font-size:20.4px;color:#878f9a;font-weight:400;">4 Oct 2024</div>
<svg class="b" style="left:2050px;top:1358px;" width="24" height="7" viewBox="0 0 24 7"><circle cx="3" cy="3.5" r="2.2" fill="#3d444f"/><circle cx="11.5" cy="3.5" r="2.2" fill="#3d444f"/><circle cx="20" cy="3.5" r="2.2" fill="#3d444f"/></svg>
<div class="b" style="left:1922px;top:1343px;width:94px;height:32px;background:#201c1f;border-radius:6px;"></div>
<div class="t" style="left:1933px;top:1339.48px;font-size:15.4px;color:#ea8a3e;font-weight:400;">PENDING</div>
</body></html>
